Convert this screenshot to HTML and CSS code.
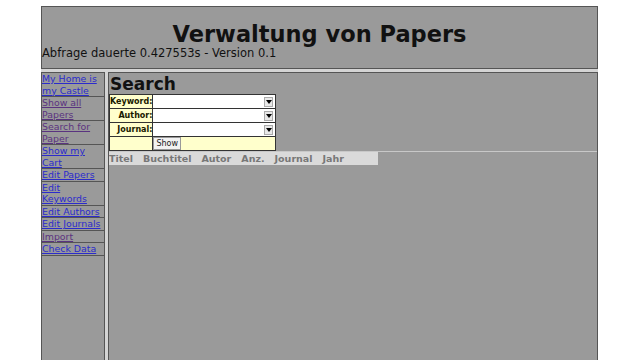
FILE: index.html
```html
<!DOCTYPE html>
<html lang="de">
<head>
    <meta charset="UTF-8">
    <title>Verwaltung von Papers</title>
    <link rel="stylesheet" href="styles.css">
</head>
<body>
    <div class="frame">
        <header class="top">
            <h1>Verwaltung von Papers</h1>
            <p class="timing">Abfrage dauerte 0.427553s - Version 0.1</p>
        </header>
        <div class="lower">
            <nav class="menu">
                <a href="#">My Home is my Castle</a>
                <a href="#" class="visited">Show all Papers</a>
                <a href="#" class="visited">Search for Paper</a>
                <a href="#">Show my Cart</a>
                <a href="#">Edit Papers</a>
                <a href="#">Edit Keywords</a>
                <a href="#">Edit Authors</a>
                <a href="#">Edit Journals</a>
                <a href="#" class="visited">Import</a>
                <a href="#">Check Data</a>
            </nav>
            <main class="content">
                <h2>Search</h2>
                <table class="search">
                    <tr>
                        <th>Keyword:</th>
                        <td><span class="sel"><span class="arrow"><svg width="6" height="4" viewBox="0 0 6 4"><path d="M0 0h6L3 4z" fill="#000"/></svg></span></span></td>
                    </tr>
                    <tr>
                        <th>Author:</th>
                        <td><span class="sel"><span class="arrow"><svg width="6" height="4" viewBox="0 0 6 4"><path d="M0 0h6L3 4z" fill="#000"/></svg></span></span></td>
                    </tr>
                    <tr>
                        <th>Journal:</th>
                        <td><span class="sel"><span class="arrow"><svg width="6" height="4" viewBox="0 0 6 4"><path d="M0 0h6L3 4z" fill="#000"/></svg></span></span></td>
                    </tr>
                    <tr>
                        <th></th>
                        <td><button class="show">Show</button></td>
                    </tr>
                </table>
                <div class="results">
                    <div class="cols">
                        <span>Titel</span>
                        <span>Buchtitel</span>
                        <span>Autor</span>
                        <span>Anz.</span>
                        <span>Journal</span>
                        <span>Jahr</span>
                    </div>
                </div>
            </main>
        </div>
    </div>
</body>
</html>
```

FILE: styles.css
```css
body {
    margin: 0;
    background: #fff;
    font-family: "DejaVu Sans", Verdana, sans-serif;
    color: #111;
}

.frame {
    margin: 6px 0 0 41px;
    width: 557px;
    height: 354px;
    overflow: hidden;
    background: #d4d4d4;
    display: flex;
    flex-direction: column;
    gap: 3px;
}

.top {
    box-sizing: border-box;
    height: 63px;
    padding: 14px 0 0 0;
    background: #9a9a9a;
    border: 1px solid #555;
}

.top h1 {
    margin: 0;
    font-size: 22.5px;
    line-height: 26px;
    text-align: center;
}

.timing {
    margin: 0;
    font-size: 11.5px;
    line-height: 13px;
}

.lower {
    flex: 1;
    display: flex;
    gap: 3px;
}

.menu {
    box-sizing: border-box;
    width: 64px;
    background: #9a9a9a;
    border: 1px solid #555;
    border-bottom: none;
}

.menu a {
    display: block;
    font-size: 9.4px;
    line-height: 11.5px;
    color: #2b2bcc;
    border-bottom: 1px solid #555;
}

.menu a.visited {
    color: #5a3380;
}

.content {
    flex: 1;
    background: #9a9a9a;
    border: 1px solid #555;
    border-bottom: none;
}

.content h2 {
    margin: 2px 0 0 1px;
    font-size: 17px;
    line-height: 19px;
}

/* search form */
.search {
    border-collapse: collapse;
}

.search th,
.search td {
    border: 1px solid #333;
    padding: 0;
    height: 13px;
    background: #ffffcc;
}

.search th {
    width: 42px;
    font-size: 8px;
    text-align: right;
    color: #1a1a00;
}

.search td {
    width: 122px;
}

.sel {
    display: flex;
    justify-content: flex-end;
    align-items: center;
    height: 13px;
    padding-right: 2px;
    background: #fff;
}

.arrow {
    display: flex;
    align-items: center;
    justify-content: center;
    width: 7px;
    height: 8px;
    background: #e8e8e8;
    border: 1px solid #aaa;
}

.show {
    display: block;
    margin: 0;
    padding: 0 2px;
    height: 13px;
    font-family: "DejaVu Sans", sans-serif;
    font-size: 8px;
    background: #f2f2f2;
    border: 1px solid #999;
    color: #222;
}

/* result table head */
.results {
    border-top: 1px solid #c8c8c8;
}

.cols {
    display: flex;
    gap: 10px;
    width: 269px;
    background: #dadada;
    font-size: 9.5px;
    font-weight: bold;
    line-height: 13px;
    color: #777;
}
```
